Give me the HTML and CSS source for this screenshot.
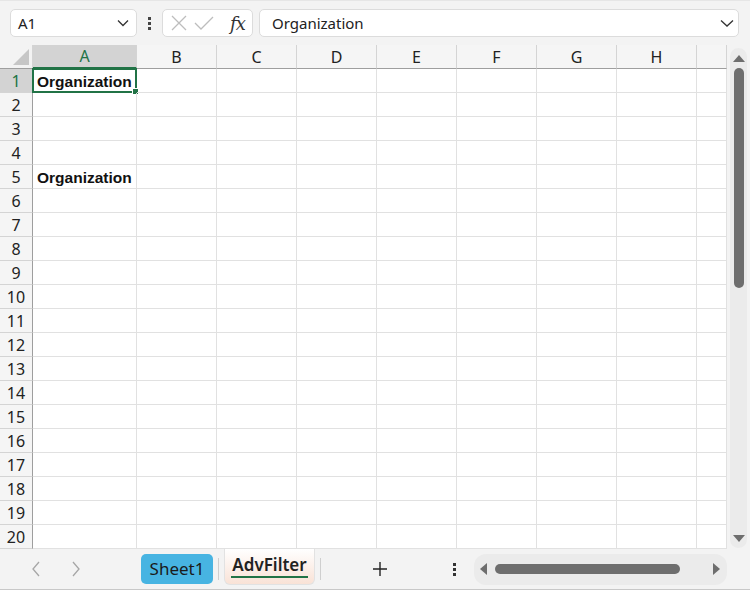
FILE: index.html
```html
<!DOCTYPE html>
<html lang="en">
<head>
    <meta charset="UTF-8">
    <title>AdvFilter</title>
    <link rel="stylesheet" href="styles.css">
</head>
<body>

    <div id="app">
        <div class="topbar">
            <div class="namebox">
                <span>A1</span>
                <svg width="12" height="8" viewBox="0 0 12 8"><path d="M1 1.5 L6 6.5 L11 1.5" fill="none" stroke="#333" stroke-width="1.3"/></svg>
            </div>
            <div class="vdots"><i></i><i></i><i></i></div>
            <div class="fxbox">
                <svg width="18" height="18" viewBox="0 0 18 18"><path d="M2 2 L16 16 M16 2 L2 16" stroke="#bdbdbd" stroke-width="1.3"/></svg>
                <svg width="20" height="18" viewBox="0 0 20 18"><path d="M1 9 L7 15 L19 3" fill="none" stroke="#bdbdbd" stroke-width="1.3"/></svg>
                <span class="fx">fx</span>
            </div>
            <div class="formula">
                <span>Organization</span>
                <svg width="14" height="8" viewBox="0 0 14 8"><path d="M1 1.5 L7 7 L13 1.5" fill="none" stroke="#333" stroke-width="1.3"/></svg>
            </div>
        </div>

        <div class="middle">
            <div class="sheet" id="sheet"></div>
            <div class="vscroll">
                <div class="arrow-up"></div>
                <div class="vthumb"></div>
                <div class="arrow-down"></div>
            </div>
        </div>

        <div class="bottombar">
            <div class="nav">
                <svg width="10" height="16" viewBox="0 0 10 16"><path d="M8 1 L2 8 L8 15" fill="none" stroke="#a6a6a6" stroke-width="1.3"/></svg>
                <svg width="10" height="16" viewBox="0 0 10 16"><path d="M2 1 L8 8 L2 15" fill="none" stroke="#a6a6a6" stroke-width="1.3"/></svg>
            </div>
            <div class="tab tab-blue">Sheet1</div>
            <div class="sep"></div>
            <div class="tab tab-active"><span>AdvFilter</span></div>
            <div class="sep"></div>
            <div class="plus">
                <svg width="16" height="16" viewBox="0 0 16 16"><path d="M8 1 V15 M1 8 H15" stroke="#222" stroke-width="1.4"/></svg>
            </div>
            <div class="vdots dark"><i></i><i></i><i></i></div>
            <div class="hscroll">
                <div class="arrow-left"></div>
                <div class="hthumb"></div>
                <div class="arrow-right"></div>
            </div>
        </div>
    </div>

    <script>
        var cols = ['A', 'B', 'C', 'D', 'E', 'F', 'G', 'H', ''];
        var sheet = document.getElementById('sheet');
        var html = '<div class="corner"><div class="tri"></div></div>';

        for(let c = 0; c < cols.length; c++) {
            html += '<div class="colhead' + (c === 0 ? ' sel' : '') + '">' + cols[c] + '</div>';
        }

        for(let r = 1; r <= 20; r++) {
            html += '<div class="rowhead' + (r === 1 ? ' sel' : '') + '">' + r + '</div>';
            for(let c = 0; c < cols.length; c++) {
                let text = '';
                let cls = 'cell';
                if(c === 0 && (r === 1 || r === 5)) {
                    text = 'Organization';
                    cls += ' bold';
                }
                if(c === 0 && r === 1) {
                    cls += ' active';
                    text += '<div class="handle"></div>';
                }
                html += '<div class="' + cls + '">' + text + '</div>';
            }
        }

        sheet.innerHTML = html;
    </script>
</body>
</html>
```

FILE: styles.css
```css
body {
    margin: 0;
    font-family: "Noto Sans", sans-serif;
    color: #222;
}

#app {
    width: 750px;
    height: 590px;
    background: #f3f3f3;
    overflow: hidden;
}

.topbar {
    height: 45px;
    display: flex;
    align-items: center;
    padding-left: 10px;
    padding-right: 11px;
    box-sizing: border-box;
    border-top: 1px solid #e6e6e6;
}

.namebox, .fxbox, .formula {
    height: 28px;
    background: #fff;
    border: 1px solid #dcdcdc;
    border-radius: 5px;
    box-sizing: border-box;
    display: flex;
    align-items: center;
}

.namebox {
    width: 127px;
    padding: 0 7px 0 7px;
    justify-content: space-between;
    font-size: 15px;
}

.vdots {
    width: 25px;
    display: flex;
    flex-direction: column;
    align-items: center;
    gap: 2px;
}

.vdots i {
    width: 3px;
    height: 3px;
    background: #444;
}

.fxbox {
    width: 91px;
    padding: 0 6px 0 7px;
    gap: 6px;
}

.fx {
    font-family: "DejaVu Serif", serif;
    font-style: italic;
    font-size: 18px;
    color: #333;
    margin-left: 10px;
    letter-spacing: -1px;
}

.formula {
    flex: 1;
    margin-left: 6px;
    padding: 0 4px 0 12px;
    justify-content: space-between;
    font-size: 15px;
}

.middle {
    display: flex;
    height: 504px;
}

.sheet {
    display: grid;
    grid-template-columns: 33px 104px repeat(7, 80px) 30px;
    grid-template-rows: repeat(21, 24px);
    width: 727px;
    background: #fff;
}

.corner {
    background: #f3f3f3;
    border-right: 1px solid #d4d4d4;
    border-bottom: 1px solid #9e9e9e;
    position: relative;
}

.tri {
    position: absolute;
    right: 3px;
    bottom: 3px;
    width: 0;
    height: 0;
    border-left: 16px solid transparent;
    border-bottom: 16px solid #c6c6c6;
}

.colhead {
    background: #f5f5f5;
    border-right: 1px solid #d4d4d4;
    border-bottom: 1px solid #9e9e9e;
    text-align: center;
    font-size: 16px;
    line-height: 24px;
}

.colhead.sel {
    background: #d3d3d3;
    color: #217346;
    border-bottom: 2px solid #217346;
    line-height: 23px;
}

.rowhead {
    background: #f5f5f5;
    border-right: 1px solid #9e9e9e;
    border-bottom: 1px solid #d4d4d4;
    text-align: center;
    font-size: 16px;
    line-height: 25px;
}

.rowhead.sel {
    background: #d3d3d3;
    color: #217346;
}

.cell {
    border-right: 1px solid #e1e1e1;
    border-bottom: 1px solid #e1e1e1;
    font-family: "Liberation Sans", sans-serif;
    font-size: 15.5px;
    line-height: 25px;
    padding-left: 4px;
    white-space: nowrap;
    position: relative;
}

.bold {
    font-weight: bold;
    color: #111;
}

.active {
    border: 2px solid #217346;
    margin: -1px 0 0 -1px;
    padding-left: 3px;
    padding-top: 1px;
    line-height: 22px;
}

.handle {
    position: absolute;
    right: -4px;
    bottom: -4px;
    width: 5px;
    height: 5px;
    background: #217346;
    border: 1px solid #fff;
}

.vscroll {
    width: 17px;
    margin: 3px 3px 0 3px;
    background: #ebebeb;
    border-radius: 9px;
    display: flex;
    flex-direction: column;
    align-items: center;
    padding: 7px 0 6px 0;
    box-sizing: border-box;
    height: 500px;
}

.arrow-up {
    border-left: 6px solid transparent;
    border-right: 6px solid transparent;
    border-bottom: 7px solid #6e6e6e;
}

.vthumb {
    width: 10px;
    height: 220px;
    background: #6e6e6e;
    border-radius: 5px;
    margin-top: 6px;
}

.arrow-down {
    margin-top: auto;
    border-left: 6px solid transparent;
    border-right: 6px solid transparent;
    border-top: 7px solid #6e6e6e;
}

.bottombar {
    height: 41px;
    display: flex;
    align-items: center;
    border-bottom: 1px solid #c8c8c8;
    box-sizing: border-box;
}

.nav {
    display: flex;
    gap: 30px;
    padding-left: 31px;
    width: 110px;
    box-sizing: border-box;
}

.tab {
    font-size: 17px;
    box-sizing: border-box;
}

.tab-blue {
    width: 72px;
    height: 30px;
    background: #47b4e2;
    border-radius: 5px;
    line-height: 29px;
    text-align: center;
    margin-left: 31px;
    color: #1a1a1a;
}

.sep {
    width: 1px;
    height: 22px;
    background: #cfcfcf;
    margin: 0 5px;
}

.tab-active {
    width: 91px;
    height: 36px;
    align-self: flex-start;
    background: linear-gradient(#ffffff, #f9e2d6);
    border: 1px solid #e2e2e2;
    border-top: none;
    border-radius: 0 0 6px 6px;
    text-align: center;
    font-weight: 600;
    padding-top: 4px;
}

.tab-active span {
    display: inline-block;
    border-bottom: 2px solid #217346;
    line-height: 22px;
    padding: 0 1px;
}

.plus {
    width: 110px;
    display: flex;
    justify-content: center;
    padding-right: 2px;
    box-sizing: border-box;
}

.vdots.dark {
    width: 40px;
    margin-left: -2px;
}

.vdots.dark i {
    background: #333;
}

.hscroll {
    margin-left: 0;
    width: 253px;
    height: 31px;
    background: #ebebeb;
    border-radius: 12px;
    display: flex;
    align-items: center;
    padding: 0 7px 0 6px;
    box-sizing: border-box;
}

.arrow-left {
    border-top: 6px solid transparent;
    border-bottom: 6px solid transparent;
    border-right: 7px solid #6e6e6e;
}

.hthumb {
    width: 185px;
    height: 10px;
    background: #6e6e6e;
    border-radius: 5px;
    margin-left: 8px;
}

.arrow-right {
    margin-left: auto;
    border-top: 6px solid transparent;
    border-bottom: 6px solid transparent;
    border-left: 7px solid #6e6e6e;
}
```
